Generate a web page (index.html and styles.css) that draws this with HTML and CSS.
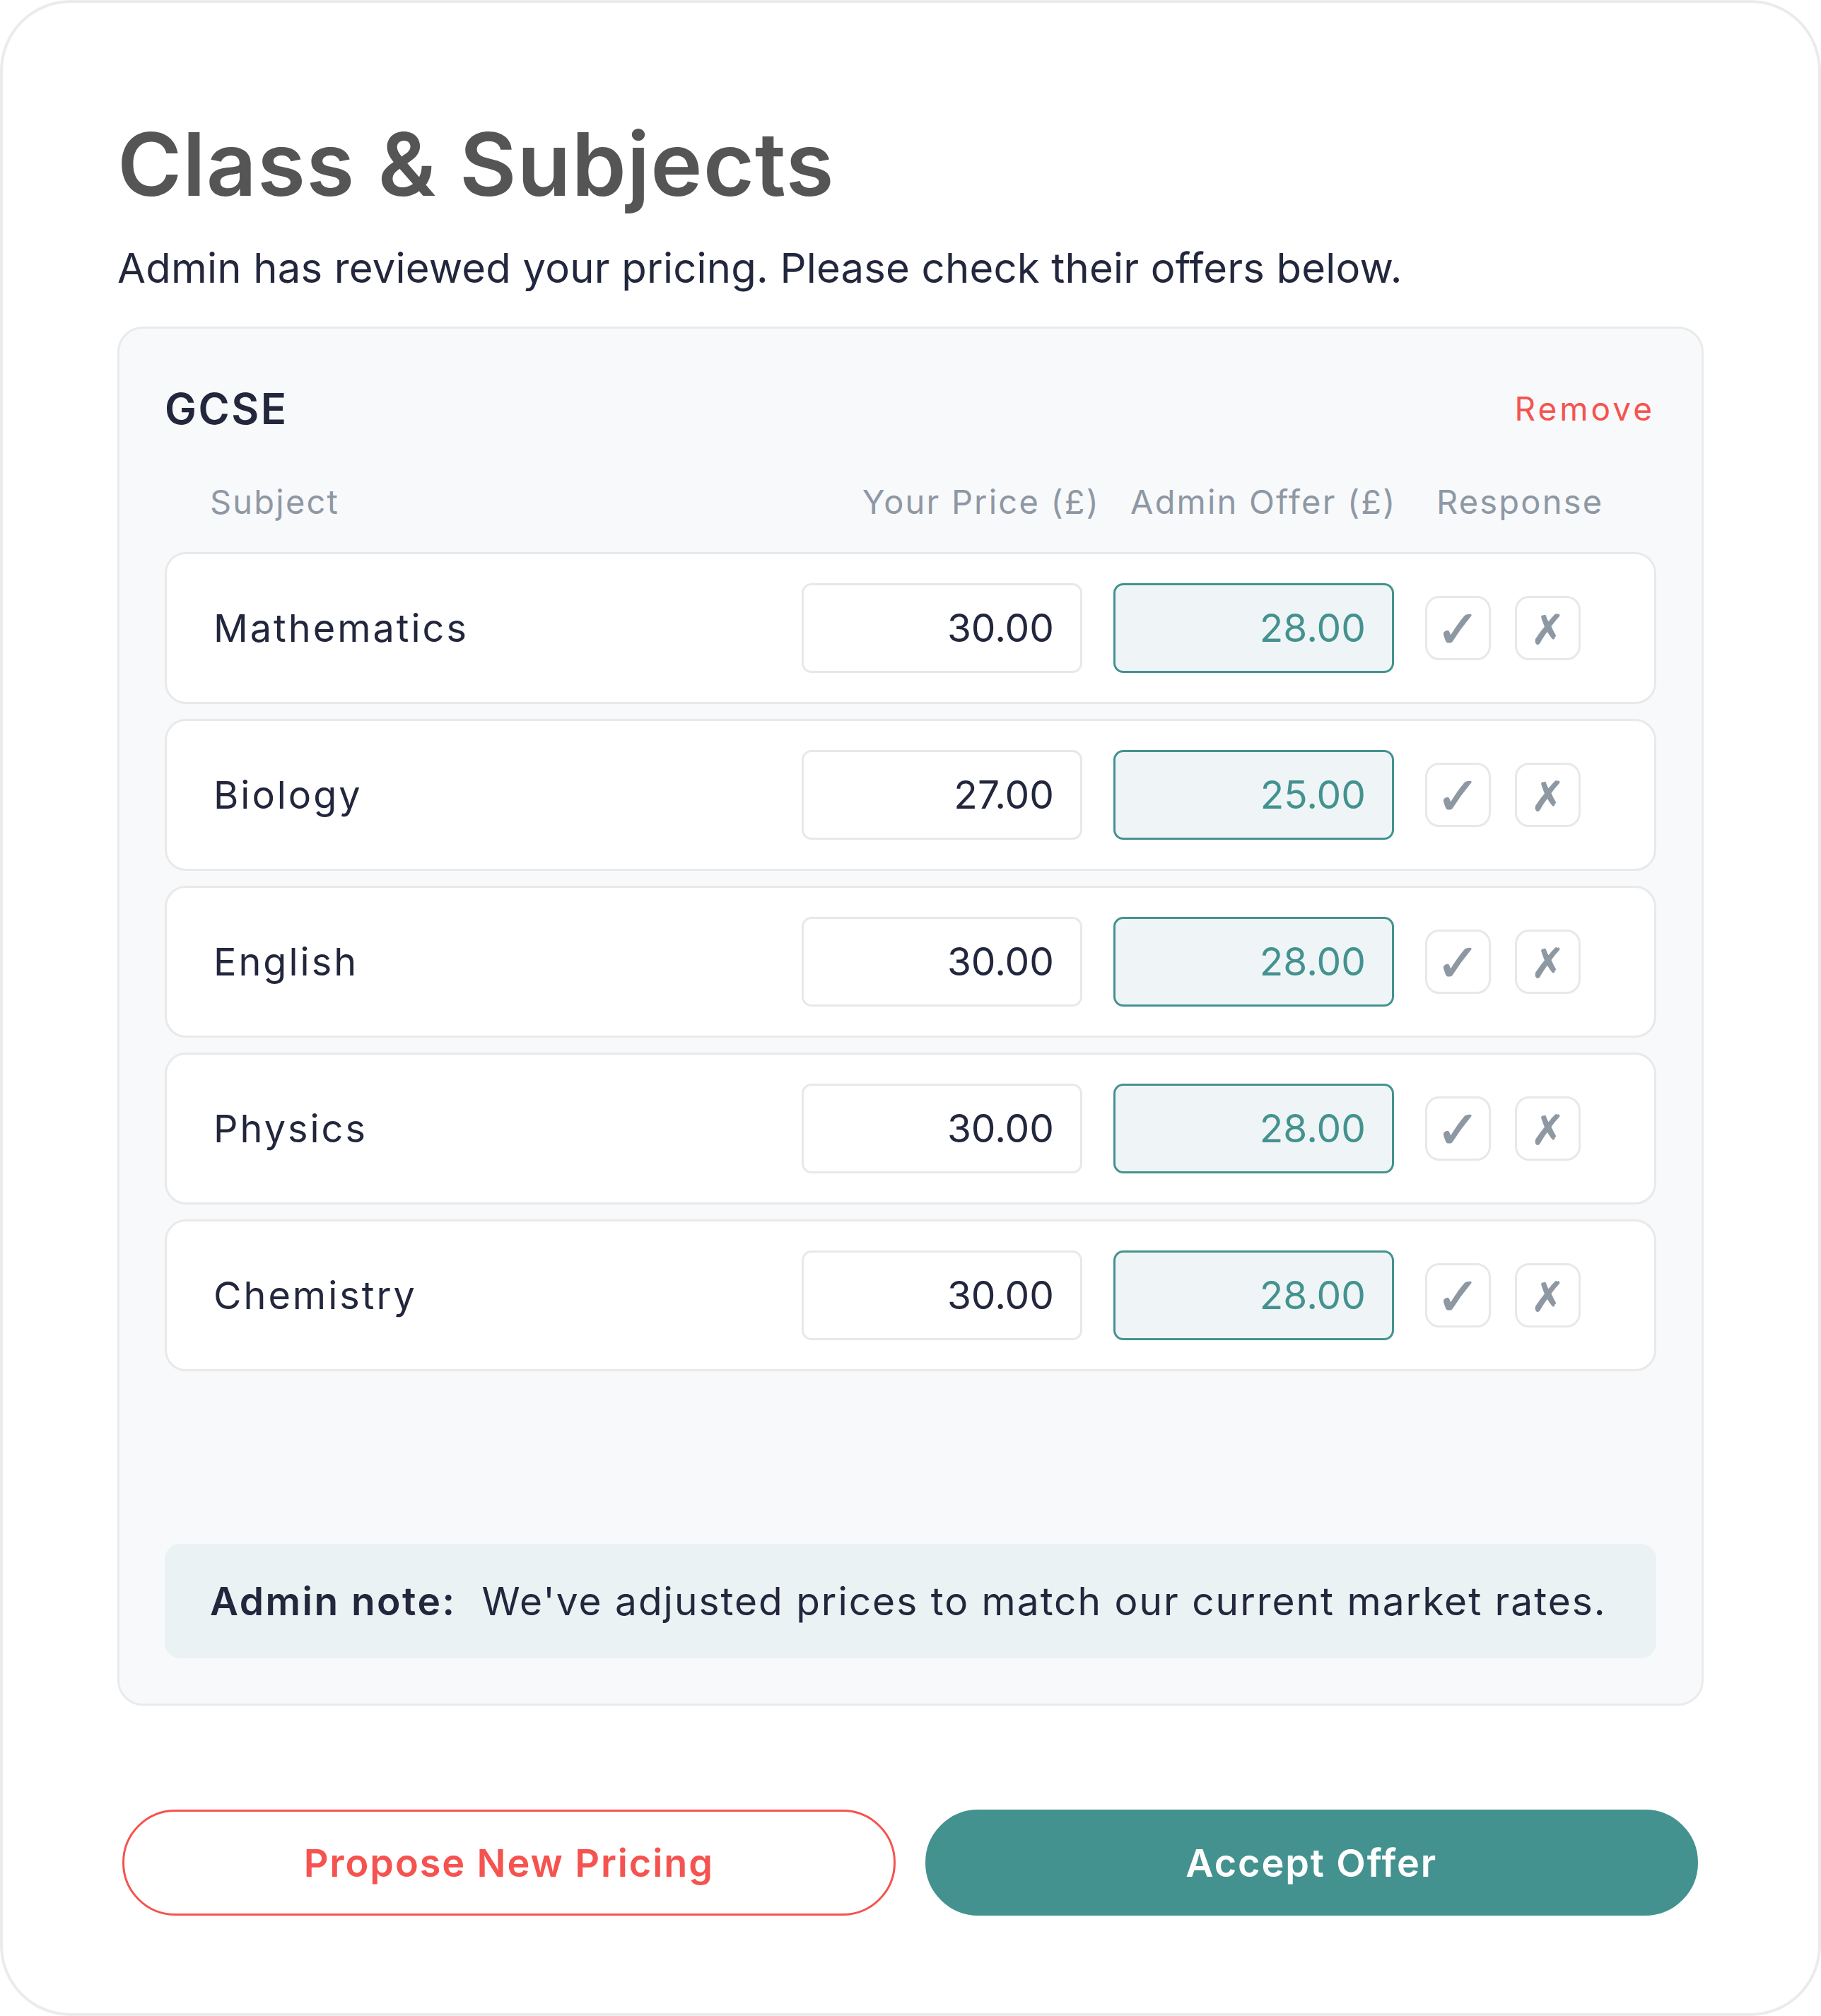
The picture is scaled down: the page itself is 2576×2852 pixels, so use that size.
FILE: index.html
```html
<!DOCTYPE html>
<html lang="en">
<head>
<meta charset="utf-8">
<title>Class &amp; Subjects</title>
<link rel="stylesheet" href="styles.css">
</head>
<body>
<div class="card">
  <h1 class="title">Class &amp; Subjects</h1>
  <p class="subtitle">Admin has reviewed your pricing. Please check their offers below.</p>

  <section class="level">
    <div class="level-head">
      <h2 class="level-name">GCSE</h2>
      <a class="remove" href="#">Remove</a>
    </div>

    <div class="cols">
      <span class="col-subject">Subject</span>
      <span class="col-your">Your Price (£)</span>
      <span class="col-admin">Admin Offer (£)</span>
      <span class="col-resp">Response</span>
    </div>

    <div class="rows">
      <div class="row">
        <span class="subject">Mathematics</span>
        <div class="price">30.00</div>
        <div class="price offer">28.00</div>
        <button class="resp accept">✓</button>
        <button class="resp reject">✗</button>
      </div>
      <div class="row">
        <span class="subject">Biology</span>
        <div class="price">27.00</div>
        <div class="price offer">25.00</div>
        <button class="resp accept">✓</button>
        <button class="resp reject">✗</button>
      </div>
      <div class="row">
        <span class="subject">English</span>
        <div class="price">30.00</div>
        <div class="price offer">28.00</div>
        <button class="resp accept">✓</button>
        <button class="resp reject">✗</button>
      </div>
      <div class="row">
        <span class="subject">Physics</span>
        <div class="price">30.00</div>
        <div class="price offer">28.00</div>
        <button class="resp accept">✓</button>
        <button class="resp reject">✗</button>
      </div>
      <div class="row">
        <span class="subject">Chemistry</span>
        <div class="price">30.00</div>
        <div class="price offer">28.00</div>
        <button class="resp accept">✓</button>
        <button class="resp reject">✗</button>
      </div>
    </div>

    <div class="note">
      <strong class="note-label">Admin note:</strong>
      <span class="note-text">We've adjusted prices to match our current market rates.</span>
    </div>
  </section>

  <div class="actions">
    <button class="btn btn-outline">Propose New Pricing</button>
    <button class="btn btn-primary">Accept Offer</button>
  </div>
</div>
</body>
</html>
```

FILE: styles.css
```css
html, body {
  margin: 0;
  padding: 0;
  background: #ffffff;
}

body {
  font-family: Inter, "Noto Sans", "Liberation Sans", sans-serif;
  color: #23273d;
}

.card {
  box-sizing: border-box;
  width: 2576px;
  height: 2852px;
  border: 4px solid #ebebeb;
  border-radius: 100px;
  background: #ffffff;
  padding: 153px 162px 0 162px;
  display: flex;
  flex-direction: column;
}

.title {
  margin: 0;
  font-size: 124px;
  line-height: 150px;
  font-weight: 600;
  letter-spacing: 1px;
  color: #555555;
}

.subtitle {
  margin: 32px 0 0 0;
  font-size: 58px;
  line-height: 80px;
  font-weight: 400;
  letter-spacing: 0.2px;
  color: #23273d;
}

.level {
  margin-top: 43px;
  border: 3px solid #e9eaec;
  border-radius: 36px;
  background: #f8f9fb;
  padding: 73px 64px 64px 64px;
}

.level-head {
  display: flex;
  align-items: center;
  justify-content: space-between;
  height: 80px;
  padding-right: 2px;
}

.level-name {
  margin: 0;
  font-size: 60px;
  line-height: 80px;
  font-weight: 600;
  letter-spacing: 2.5px;
  color: #23273d;
}

.remove {
  font-size: 46px;
  line-height: 80px;
  letter-spacing: 4px;
  color: #f5534f;
  text-decoration: none;
}

.cols {
  display: flex;
  margin-top: 52px;
  height: 80px;
  line-height: 80px;
  font-size: 47px;
  letter-spacing: 2.2px;
  color: #8e98a4;
  padding-left: 64px;
}

.col-subject { flex: 1; }
.col-your { margin-right: 43px; }
.col-admin { width: 433px; }
.col-resp { width: 311px; }

.rows {
  margin-top: 31px;
  display: flex;
  flex-direction: column;
  gap: 21px;
}

.row {
  box-sizing: border-box;
  height: 215px;
  border: 3px solid #e9e9e9;
  border-radius: 30px;
  background: #ffffff;
  display: flex;
  align-items: center;
  padding: 0 104px 0 66px;
}

.subject {
  flex: 1;
  font-size: 54px;
  letter-spacing: 3px;
  color: #23273d;
}

.price {
  box-sizing: border-box;
  width: 397px;
  height: 127px;
  border: 3px solid #e8e8e8;
  border-radius: 14px;
  background: #ffffff;
  font-size: 55px;
  line-height: 121px;
  text-align: right;
  padding-right: 37px;
  color: #23273d;
}

.price.offer {
  margin-left: 44px;
  border-color: #44928f;
  background: #eff5f7;
  color: #44928f;
}

.resp {
  box-sizing: border-box;
  width: 93px;
  height: 91px;
  margin-left: 44px;
  border: 3px solid #e8e8e8;
  border-radius: 20px;
  background: #ffffff;
  color: #8e98a3;
  font-family: "DejaVu Sans", sans-serif;
  padding: 0;
  display: flex;
  align-items: center;
  justify-content: center;
}

.resp.accept {
  font-size: 74px;
  line-height: 85px;
  -webkit-text-stroke: 1.5px #8e98a3;
  padding-top: 4px;
}

.resp.reject {
  margin-left: 34px;
  font-size: 58px;
  line-height: 85px;
  -webkit-text-stroke: 1px #8e98a3;
  padding-top: 6px;
}

.note {
  margin-top: 244px;
  box-sizing: border-box;
  height: 162px;
  border-radius: 22px;
  background: #eaf2f3;
  display: flex;
  align-items: center;
  padding-left: 64px;
  font-size: 55px;
  color: #23273d;
}

.note-label {
  font-weight: 600;
  letter-spacing: 2.5px;
  margin-right: 36px;
}

.note-text {
  letter-spacing: 2px;
}

.actions {
  margin-top: 147px;
  display: flex;
  gap: 42px;
  padding: 0 8px 0 7px;
}

.btn {
  flex: 1;
  box-sizing: border-box;
  height: 150px;
  border-radius: 75px;
  font-family: Inter, "Noto Sans", "Liberation Sans", sans-serif;
  font-size: 54px;
  font-weight: 600;
  letter-spacing: 1.9px;
  cursor: pointer;
}

.btn-outline {
  border: 3px solid #f5534f;
  background: #ffffff;
  color: #f5534f;
}

.btn-primary {
  border: 3px solid #44928f;
  background: #44928f;
  color: #ffffff;
}
```
